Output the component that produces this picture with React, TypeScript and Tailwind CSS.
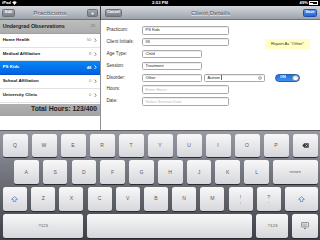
import type { ReactNode } from "react";

const navBg = "bg-gradient-to-b from-[#d3d6db] via-[#b9bdc4] to-[#9ea3ab] border-b border-[#6e737a]";
const barBtn =
  "h-[8px] rounded-[1.5px] border border-[#6a7078] bg-gradient-to-b from-[#a3a8b0] to-[#7a808a] text-white text-[3.8px] font-bold flex items-center justify-center";

const rows = [
  { label: "Home Health", count: 50 },
  { label: "Medical Affiliation", count: 8 },
  { label: "PS Kids", count: 48, selected: true },
  { label: "School Affiliation", count: 0 },
  { label: "University Clinic", count: 0 },
];

function Chevron({ white }: { white?: boolean }) {
  return (
    <svg width="3" height="4.5" viewBox="0 0 6 9" className="ml-[3px]">
      <path d="M1 1 L4.5 4.5 L1 8" fill="none" stroke={white ? "#fff" : "#7f7f7f"} strokeWidth="1.8" />
    </svg>
  );
}

function StatusBar() {
  return (
    <div className="h-[6.25px] bg-black text-white text-[4.2px] font-bold flex items-center justify-between px-[2px] relative leading-none">
      <div className="flex items-center gap-[1.5px]">
        <span>iPad</span>
        <svg width="5" height="4" viewBox="0 0 10 8">
          <path d="M5 8 L0.5 2.5 A7 7 0 0 1 9.5 2.5 Z" fill="#fff" />
        </svg>
      </div>
      <span className="absolute left-1/2 -translate-x-1/2">2:53 PM</span>
      <div className="flex items-center gap-[1px]">
        <span>49%</span>
        <div className="w-[9px] h-[3.6px] border-[0.6px] border-white flex p-[0.4px]">
          <div className="w-[45%] bg-white" />
        </div>
      </div>
    </div>
  );
}

function Master() {
  return (
    <div className="w-[100px] flex flex-col">
      <div className={`h-[13.75px] ${navBg} relative flex items-center justify-between px-[2px]`}>
        <div className={`${barBtn} w-[13px]`}>Edit</div>
        <span className="absolute left-1/2 -translate-x-1/2 text-[6.2px] font-bold text-[#6f757d] [text-shadow:0_0.5px_0_#e8eaed]">
          Practicums
        </span>
        <div className={`${barBtn} w-[11px] text-[6px]`}>+</div>
      </div>
      <div className="h-[13.75px] bg-gradient-to-b from-[#bdbdbd] to-[#acacac] flex items-center justify-between px-[2.7px] border-b border-[#a0a0a0]">
        <span className="text-[5.3px] font-bold text-[#222]">Undergrad Observations</span>
        <span className="text-[4.3px] text-[#6b6f80] mr-[2px]">25</span>
      </div>
      {rows.map((r) => (
        <div
          key={r.label}
          className={`h-[13.75px] flex items-center justify-between px-[2.7px] border-b ${
            r.selected
              ? "bg-gradient-to-b from-[#0b87f4] to-[#0260e4] border-[#0255c9] text-white"
              : "bg-white border-[#e2e2e2] text-[#111]"
          }`}
        >
          <span className="text-[4.4px] font-bold">{r.label}</span>
          <div className="flex items-center">
            <span className={`text-[4.2px] ${r.selected ? "text-white font-bold" : "text-[#8a8a8a]"}`}>{r.count}</span>
            <Chevron white={r.selected} />
          </div>
        </div>
      ))}
      <div className="mt-[1px] h-[12px] bg-gradient-to-b from-[#b0b0b0] to-[#a3a3a3] flex items-center justify-end pr-[3px]">
        <span className="text-[6.8px] font-bold text-[#1e1e1e]">Total Hours: 123/400</span>
      </div>
      <div className="flex-1 bg-white" />
    </div>
  );
}

function Field({ w, value, placeholder, children }: { w: string; value?: string; placeholder?: string; children?: ReactNode }) {
  return (
    <div className={`${w} h-full border-[0.7px] border-[#a9a9a9] rounded-[1.5px] bg-white flex items-center px-[2.5px] text-[4px] shadow-[inset_0_0.5px_0.5px_rgba(0,0,0,0.15)]`}>
      {value ? <span className="text-[#222]">{value}</span> : <span className="text-[#b9b9b9]">{placeholder}</span>}
      {children}
    </div>
  );
}

function Row({ label, children }: { label: string; children: ReactNode }) {
  return (
    <div className="h-[8.5px] flex items-center">
      <span className="w-[35.5px] shrink-0 text-[4.6px] text-[#333]">{label}</span>
      {children}
    </div>
  );
}

function Detail() {
  return (
    <div className="flex-1 flex flex-col bg-white">
      <div className={`h-[13.75px] ${navBg} relative flex items-center justify-between pl-[4px] pr-[2.7px]`}>
        <div className={`${barBtn} w-[17px] text-[3.6px]`}>Cancel</div>
        <span className="absolute left-1/2 -translate-x-1/2 text-[6.2px] font-bold text-[#6f757d] [text-shadow:0_0.5px_0_#e8eaed]">
          Client Details
        </span>
        <div className="h-[8px] w-[14.6px] rounded-[1.5px] border border-[#1f4fa8] bg-gradient-to-b from-[#5c93ef] to-[#2a64d6] text-white text-[3.8px] font-bold flex items-center justify-center">
          Save
        </div>
      </div>
      <div className="pl-[5.5px] pt-[6px] flex flex-col gap-[3.4px]">
        <Row label="Practicum:">
          <Field w="w-[87px]" value="PS Kids" />
        </Row>
        <Row label="Client Initials:">
          <Field w="w-[87px]" value="IIII" />
          <div className="ml-[36px] mt-[3px] h-[10px] w-[45px] bg-[#ffffc4] flex items-center justify-center text-[4.2px] text-[#333] shrink-0">
            Report As "Other"
          </div>
        </Row>
        <Row label="Age Type:">
          <Field w="w-[60px]" value="Child" />
        </Row>
        <Row label="Session:">
          <Field w="w-[60px]" value="Treatment" />
        </Row>
        <Row label="Disorder:">
          <Field w="w-[60px]" value="Other" />
          <div className="ml-[2px] w-[61px] h-full">
            <Field w="w-full" value="Autism">
              <span className="w-[0.6px] h-[5px] bg-[#3a6fe0] ml-[1.5px]" />
              <svg width="4" height="4" viewBox="0 0 10 10" className="ml-auto">
                <circle cx="5" cy="5" r="4.5" fill="#9d9d9d" />
                <path d="M3 3 L7 7 M7 3 L3 7" stroke="#fff" strokeWidth="1.3" />
              </svg>
            </Field>
          </div>
          <div className="ml-[10px] w-[25px] h-[7.5px] rounded-full bg-gradient-to-b from-[#1a6fdc] to-[#3f8ff2] border-[0.5px] border-[#2a5faf] flex items-center relative overflow-hidden">
            <span className="text-[3.8px] font-bold text-white ml-[4px]">ON</span>
            <div className="absolute right-0 top-0 h-full w-[7.5px] rounded-full bg-gradient-to-b from-[#e6e6e6] to-[#ffffff] border-[0.5px] border-[#9a9a9a]" />
          </div>
        </Row>
        <Row label="Hours:">
          <Field w="w-[87px]" placeholder="Enter Hours" />
        </Row>
        <Row label="Date:">
          <Field w="w-[87px]" placeholder="Select Session Date" />
        </Row>
      </div>
    </div>
  );
}

const keyCls =
  "h-[23.5px] rounded-[2.5px] bg-gradient-to-b from-[#f8f8f9] to-[#d6d7db] shadow-[0_1px_0_#2a2b30] flex items-center justify-center text-[#5a5b5e] shrink-0";

function Key({ w, children }: { w: string; children: ReactNode }) {
  return <div className={`${keyCls} ${w}`}>{children}</div>;
}

function Letter({ c, w = "w-[25px]" }: { c: string; w?: string }) {
  return (
    <Key w={w}>
      <span className="text-[5.1px]">{c}</span>
    </Key>
  );
}

function Shift() {
  return (
    <svg width="7" height="6" viewBox="0 0 12 10">
      <path d="M6 0.8 L11 5.6 H8.2 V9.2 H3.8 V5.6 H1 Z" fill="none" stroke="#3d6fe6" strokeWidth="1.1" strokeLinejoin="round" />
    </svg>
  );
}

function Keyboard() {
  const r1 = ["Q", "W", "E", "R", "T", "Y", "U", "I", "O", "P"];
  const r2 = ["A", "S", "D", "F", "G", "H", "J", "K", "L"];
  const r3 = ["Z", "X", "C", "V", "B", "N", "M"];
  return (
    <div className="h-[110px] bg-gradient-to-b from-[#979aa3] to-[#3f4047] border-t border-[#5c5e64] flex flex-col pt-[2.5px] gap-[3.4px]">
      <div className="flex gap-[4px] px-[2.5px]">
        {r1.map((c) => (
          <Letter key={c} c={c} />
        ))}
        <Key w="w-[25px]">
          <svg width="7" height="5" viewBox="0 0 14 10">
            <path d="M4.5 0.5 H13.5 V9.5 H4.5 L0.5 5 Z" fill="#3b3b3e" />
            <path d="M7 3 L11 7 M11 3 L7 7" stroke="#e8e8e8" strokeWidth="1.3" />
          </svg>
        </Key>
      </div>
      <div className="flex gap-[4.2px] pl-[14px] pr-[2.5px]">
        {r2.map((c) => (
          <Letter key={c} c={c} w="w-[24.6px]" />
        ))}
        <Key w="flex-1">
          <span className="text-[4.4px]">return</span>
        </Key>
      </div>
      <div className="flex gap-[4.2px] px-[2.5px]">
        <Key w="w-[24.5px]">
          <Shift />
        </Key>
        {r3.map((c) => (
          <Letter key={c} c={c} w="w-[24px]" />
        ))}
        <Key w="w-[24px]">
          <div className="flex flex-col items-center leading-[4.5px] text-[5px]">
            <span>!</span>
            <span>,</span>
          </div>
        </Key>
        <Key w="w-[24px]">
          <div className="flex flex-col items-center leading-[4.5px] text-[5px]">
            <span>?</span>
            <span>.</span>
          </div>
        </Key>
        <Key w="flex-1">
          <Shift />
        </Key>
      </div>
      <div className="flex gap-[4.2px] px-[2.5px]">
        <Key w="w-[80px]">
          <span className="text-[4.4px]">.?123</span>
        </Key>
        <Key w="w-[165px]">
          <span />
        </Key>
        <Key w="w-[32px]">
          <span className="text-[4.4px]">.?123</span>
        </Key>
        <Key w="flex-1">
          <svg width="8" height="8" viewBox="0 0 16 16">
            <rect x="1" y="1" width="14" height="9" rx="1" fill="none" stroke="#444" strokeWidth="1" />
            <path d="M3 4 H13 M3 6 H13 M5 8 H11" stroke="#444" strokeWidth="0.9" strokeDasharray="1.2 0.8" />
            <path d="M6 12 H10 L8 14.5 Z" fill="#444" />
          </svg>
        </Key>
      </div>
    </div>
  );
}

export default function App() {
  return (
    <div className="w-[320px] h-[240px] overflow-hidden flex flex-col bg-white font-['Liberation_Sans',Arial,sans-serif] leading-none select-none">
      <StatusBar />
      <div className="flex h-[123.75px]">
        <Master />
        <div className="w-px flex flex-col">
          <div className="h-[13.75px] bg-[#3f4348]" />
          <div className="flex-1 bg-[#8f8f8f]" />
        </div>
        <Detail />
      </div>
      <Keyboard />
    </div>
  );
}
